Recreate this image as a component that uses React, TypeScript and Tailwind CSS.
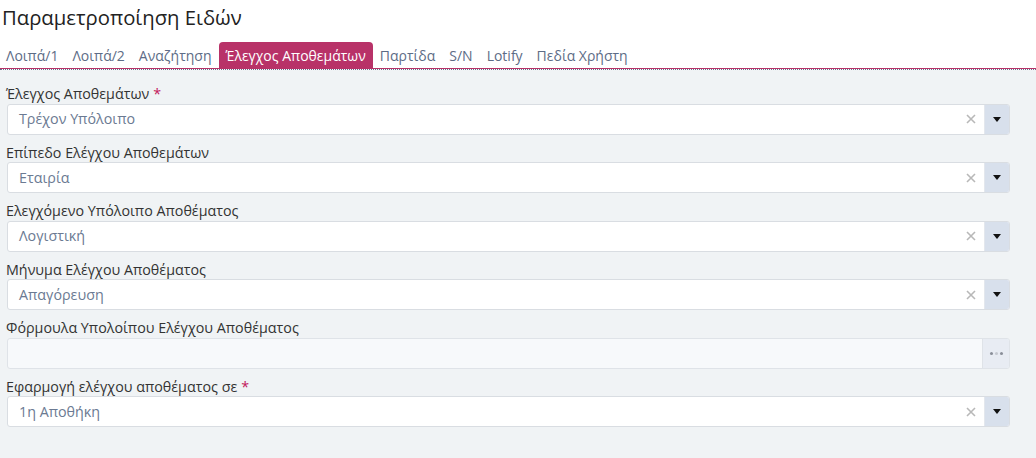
import React from "react";

const font = { fontFamily: '"Open Sans", "Noto Sans", sans-serif' };

function Caret() {
  return (
    <svg width="8" height="5" viewBox="0 0 8 5">
      <path d="M0 0 L8 0 L4 5 Z" fill="#111" />
    </svg>
  );
}

function ClearX() {
  return (
    <svg width="10" height="10" viewBox="0 0 10 10">
      <path d="M1 1 L9 9 M9 1 L1 9" stroke="#b8b8b8" strokeWidth="1.6" />
    </svg>
  );
}

function SelectField({ label, value, required }: { label: string; value: string; required?: boolean }) {
  return (
    <div className="mb-[8px]">
      <div className="text-[14.3px] leading-[19.5px] text-[#333] pl-[6px]">
        {label}
        {required && <span className="text-[#c2185b] ml-[4px]">*</span>}
      </div>
      <div className="flex h-[31px] ml-[7px] mr-[26px] bg-white border border-[#d9dde2] rounded-[3px] overflow-hidden">
        <div className="flex-1 flex items-center pl-[11px] text-[14.3px] text-[#6b7a92]">{value}</div>
        <div className="flex items-center pr-[8px]">
          <ClearX />
        </div>
        <div className="w-[25px] bg-[#d8e0ec] flex items-center justify-center border-l border-[#e3e7ed]">
          <Caret />
        </div>
      </div>
    </div>
  );
}

function FormulaField({ label }: { label: string }) {
  return (
    <div className="mb-[8px]">
      <div className="text-[14.3px] leading-[19.5px] text-[#333] pl-[6px]">{label}</div>
      <div className="flex h-[31px] ml-[7px] mr-[26px] bg-[#f7f9fb] border border-[#dfe3e8] rounded-[3px] overflow-hidden">
        <div className="flex-1" />
        <div className="w-[27px] bg-[#e8ecf3] flex items-center justify-center border-l border-[#dfe3e8] gap-[2px]">
          <span className="w-[3px] h-[3px] rounded-full bg-[#8a8f99]" />
          <span className="w-[3px] h-[3px] rounded-full bg-[#c5c9d0]" />
          <span className="w-[3px] h-[3px] rounded-full bg-[#8a8f99]" />
        </div>
      </div>
    </div>
  );
}

export default function App() {
  const tabs = ["Λοιπά/1", "Λοιπά/2", "Αναζήτηση", "Έλεγχος Αποθεμάτων", "Παρτίδα", "S/N", "Lotify", "Πεδία Χρήστη"];
  return (
    <div style={font} className="w-[1036px] h-[458px] bg-[#f0f3f5] overflow-hidden">
      <div className="bg-white">
        <div className="h-[42px] pl-[2px] pt-[3px] text-[20.3px] leading-[28px] text-[#222]">Παραμετροποίηση Ειδών</div>
        <div className="flex items-end h-[26px] ml-[-1px]">
          {tabs.map((t) => {
            const active = t === "Έλεγχος Αποθεμάτων";
            return (
              <div
                key={t}
                className={
                  active
                    ? "h-[26px] px-[7px] flex items-center bg-[#b83268] text-white rounded-t-[4px] text-[14px]"
                    : "h-[26px] px-[7px] flex items-center text-[#5d6c86] text-[14px]"
                }
              >
                {t}
              </div>
            );
          })}
        </div>
        <div className="h-[1px] bg-[#b83268]" />
        <div className="border-b border-dotted border-[#6a6d8a]" />
      </div>
      <div className="pt-[14px]">
        <SelectField label="Έλεγχος Αποθεμάτων" value="Τρέχον Υπόλοιπο" required />
        <SelectField label="Επίπεδο Ελέγχου Αποθεμάτων" value="Εταιρία" />
        <SelectField label="Ελεγχόμενο Υπόλοιπο Αποθέματος" value="Λογιστική" />
        <SelectField label="Μήνυμα Ελέγχου Αποθέματος" value="Απαγόρευση" />
        <FormulaField label="Φόρμουλα Υπολοίπου Ελέγχου Αποθέματος" />
        <SelectField label="Εφαρμογή ελέγχου αποθέματος σε" value="1η Αποθήκη" required />
      </div>
    </div>
  );
}
